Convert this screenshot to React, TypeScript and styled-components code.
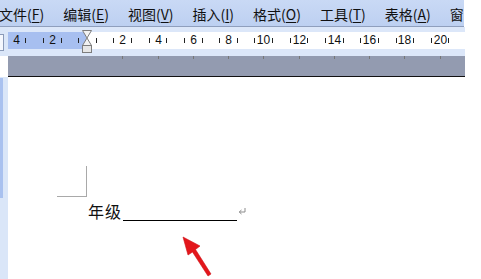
import styled, { createGlobalStyle } from 'styled-components';

const GlobalStyle = createGlobalStyle`
  html, body {
    margin: 0;
    padding: 0;
    background: #ffffff;
    overflow: hidden;
  }
`;

// 菜单项，带下划线的快捷键字母
const MENUS = [
  { label: '文件', key: 'F' },
  { label: '编辑', key: 'E' },
  { label: '视图', key: 'V' },
  { label: '插入', key: 'I' },
  { label: '格式', key: 'O' },
  { label: '工具', key: 'T' },
  { label: '表格', key: 'A' },
  { label: '窗', key: '' },
];

const ZERO = 79; // 标尺 0 点 (相对标尺左边)
const UNIT = 17.63;

const Screen = styled.div`
  width: 481px;
  height: 279px;
  display: flex;
  flex-direction: column;
  background: #ffffff;
  font-family: 'Noto Sans CJK SC', 'Liberation Sans', sans-serif;
  position: relative;
  overflow: hidden;
`;

const MenuBar = styled.div`
  width: 465px;
  height: 27px;
  box-sizing: border-box;
  background: linear-gradient(#c9d9f5, #bdd0f1);
  border-bottom: 1px solid #8f9fbd;
  display: flex;
  align-items: center;
  gap: 19px;
  margin-left: -1px;
  overflow: hidden;
  white-space: nowrap;
`;

const MenuItem = styled.span`
  font-size: 14px;
  line-height: 26px;
  color: #111;
  padding-top: 1px;
`;

const Hot = styled.span`
  text-decoration: underline;
  text-underline-offset: 2px;
`;

const RulerRow = styled.div`
  display: flex;
  width: 465px;
  height: 29px;
`;

const SideCap = styled.div`
  width: 8px;
  flex: none;
  background: #dae6f8;
  display: flex;
  align-items: center;
`;

const CapBox = styled.div`
  width: 3px;
  height: 15px;
  margin-top: 1px;
  background: #f4f7fd;
  border: 1px solid #8a9ab8;
  border-left: none;
`;

const Ruler = styled.div`
  flex: 1;
  display: flex;
  flex-direction: column;
  background: #dce7f9;
  position: relative;
`;

const RulerStrip = styled.div`
  margin-top: 5px;
  height: 17px;
  background: linear-gradient(
    to right,
    #a7bff0 0,
    #a7bff0 ${ZERO - 1}px,
    #ffffff ${ZERO - 1}px
  );
  position: relative;
`;

const Tick = styled.span`
  position: absolute;
  top: 6px;
  width: 1px;
  height: 5px;
  background: #222;
`;

const Num = styled.span`
  position: absolute;
  top: 1px;
  font-family: 'Liberation Sans', sans-serif;
  font-size: 12px;
  line-height: 15px;
  color: #111;
  transform: translateX(-50%);
`;

const LowTick = styled.span`
  position: absolute;
  top: 24px;
  width: 1px;
  height: 3px;
  background: #777;
`;

const Marker = styled.svg`
  position: absolute;
  top: 3px;
  left: ${ZERO - 5}px;
`;

const GrayBand = styled.div`
  margin-left: 8px;
  width: 457px;
  height: 20px;
  background: #939bb0;
  border-bottom: 1px solid #111;
`;

const Body = styled.div`
  flex: 1;
  display: flex;
`;

const SideStrip = styled.div`
  width: 8px;
  flex: none;
  background: #dae6f8;
  display: flex;
  flex-direction: column;
`;

const SideMargin = styled.div`
  margin-top: 1px;
  width: 3px;
  height: 120px;
  background: #a9c1ef;
`;

const Page = styled.div`
  flex: 1;
  background: #ffffff;
  display: flex;
  flex-direction: column;
`;

const Corner = styled.div`
  margin-top: 89px;
  margin-left: 49px;
  width: 29px;
  height: 30px;
  border-right: 1px solid #a9a9a9;
  border-bottom: 1px solid #a9a9a9;
`;

const Line = styled.div`
  margin-left: 80px;
  margin-top: 4px;
  display: flex;
  align-items: flex-end;
  height: 20px;
`;

const Label = styled.span`
  font-size: 16px;
  line-height: 20px;
  letter-spacing: 1px;
  color: #111;
`;

const Blank = styled.span`
  width: 114px;
  height: 18px;
  margin-left: 1px;
  border-bottom: 1px solid #000;
`;

const Return = styled.svg`
  margin-left: 1px;
  margin-bottom: 6px;
`;

const Arrow = styled.svg`
  position: absolute;
  left: 178px;
  top: 232px;
`;

function RulerMarks() {
  const marks = [];
  for (let k = -5; k <= 21; k++) {
    const x = ZERO + (k + 0.5) * UNIT;
    if (x < 0 || x > 455) continue;
    marks.push(<Tick key={'t' + k} style={{ left: Math.round(x) }} />);
  }
  for (let n = -4; n <= 20; n += 2) {
    if (n === 0) continue;
    const x = ZERO + n * UNIT;
    marks.push(
      <Num key={'n' + n} style={{ left: Math.round(x) + 0.5 }}>
        {Math.abs(n)}
      </Num>
    );
    if (n > 0) marks.push(<LowTick key={'l' + n} style={{ left: Math.round(x) }} />);
  }
  return <>{marks}</>;
}

export default function App() {
  return (
    <>
      <GlobalStyle />
      <Screen>
        <MenuBar>
          {MENUS.map((m) => (
            <MenuItem key={m.label}>
              {m.label}
              {m.key && (
                <>
                  (<Hot>{m.key}</Hot>)
                </>
              )}
            </MenuItem>
          ))}
        </MenuBar>
        <RulerRow>
          <SideCap>
            <CapBox />
          </SideCap>
          <Ruler>
            <RulerStrip>
              <RulerMarks />
            </RulerStrip>
            <Marker width="10" height="24" viewBox="0 0 10 24">
              <path d="M0.5 0.5 H9.5 L5 8 Z" fill="#f2f2f2" stroke="#7d7d7d" />
              <path d="M5 8 L9.5 15.5 H0.5 Z" fill="#f2f2f2" stroke="#7d7d7d" />
              <rect x="0.5" y="15.5" width="9" height="7" fill="#e6e6e6" stroke="#7d7d7d" />
            </Marker>
          </Ruler>
        </RulerRow>
        <GrayBand />
        <Body>
          <SideStrip>
            <SideMargin />
          </SideStrip>
          <Page>
            <Corner />
            <Line>
              <Label>年级</Label>
              <Blank />
              <Return width="8" height="7" viewBox="0 0 8 7">
                <path d="M7 0 V4 H1.5 M3.5 2 L1.2 4 L3.5 6" fill="none" stroke="#8c8c8c" strokeWidth="1" />
              </Return>
            </Line>
          </Page>
        </Body>
        <Arrow width="40" height="48" viewBox="0 0 40 48">
          <path
            d="M5 5 L22 14 L17.5 17.5 L33 42 L30 44 L14.5 20 L10 23 Z"
            fill="#e3161b"
            stroke="#d01015"
            strokeWidth="0.6"
            strokeLinejoin="round"
          />
        </Arrow>
      </Screen>
    </>
  );
}
